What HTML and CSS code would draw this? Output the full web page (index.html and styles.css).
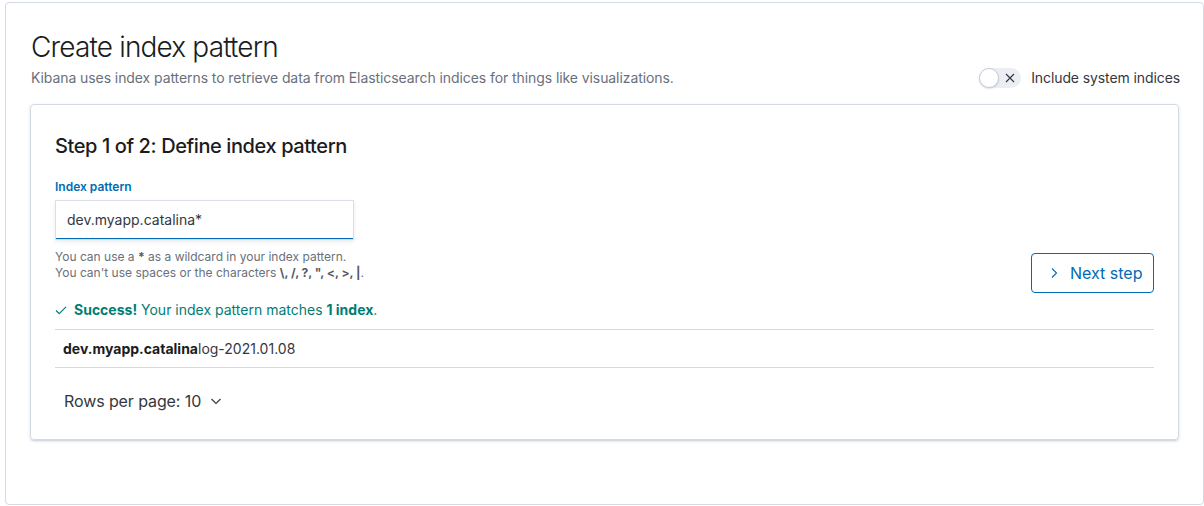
FILE: index.html
```html
<!DOCTYPE html>
<html lang="en">
<head>
    <meta charset="UTF-8">
    <title>Create index pattern</title>
    <link rel="stylesheet" href="styles.css">
</head>
<body>

<div class="page">
    <h1 class="title">Create index pattern</h1>
    <div class="intro">
        <p class="subtitle">Kibana uses index patterns to retrieve data from Elasticsearch indices for things like visualizations.</p>
        <label class="switch">
            <span class="switch-track">
                <span class="switch-knob"></span>
                <svg class="switch-x" width="12" height="12" viewBox="0 0 12 12"><path d="M2 2l8 8M10 2l-8 8" stroke="#343741" stroke-width="1.1" fill="none"/></svg>
            </span>
            Include system indices
        </label>
    </div>

    <div class="card">
        <h2 class="step">Step 1 of 2: Define index pattern</h2>

        <div class="step-body">
            <div class="form">
                <div class="field-label">Index pattern</div>
                <div class="field">dev.myapp.catalina*</div>
                <div class="help">
                    <div>You can use a <b>*</b> as a wildcard in your index pattern.</div>
                    <div>You can't use spaces or the characters <b>\, /, ?, ", &lt;, &gt;, |</b>.</div>
                </div>
                <div class="success">
                    <svg width="12" height="12" viewBox="0 0 12 12"><path d="M1 6.5l3.2 3.2L11 2.8" stroke="#017D73" stroke-width="1.1" fill="none"/></svg>
                    <span><b>Success!</b> Your index pattern matches <b>1 index</b>.</span>
                </div>
            </div>
            <button class="next">
                <svg width="12" height="12" viewBox="0 0 12 12"><path d="M4 1.5l4.5 4.5L4 10.5" stroke="#006BB4" stroke-width="1.1" fill="none"/></svg>
                Next step
            </button>
        </div>

        <div class="table">
            <div class="row"><b>dev.myapp.catalina</b>log-2021.01.08</div>
        </div>

        <div class="pager">
            Rows per page: 10
            <svg width="12" height="12" viewBox="0 0 12 12"><path d="M1.5 4l4.5 4.5L10.5 4" stroke="#343741" stroke-width="1.1" fill="none"/></svg>
        </div>
    </div>
</div>

</body>
</html>
```
FILE: styles.css
```css
body {
    margin: 0;
    background-color: #fff;
    font-family: Inter, "Noto Sans", sans-serif;
    color: #343741;
}

.page {
    margin: 2px 0 0 5px;
    height: 503px;
    box-sizing: border-box;
    border: 1px solid #D3DAE6;
    border-radius: 4px;
    padding: 24px 24px 0 24px;
}

.title {
    margin: 0 0 1px 1px;
    font-size: 28px;
    line-height: 40px;
    font-weight: 300;
    letter-spacing: -0.03em;
    color: #1a1c21;
}

.intro {
    display: flex;
    justify-content: space-between;
    align-items: center;
    margin-bottom: 16px;
}

.subtitle {
    margin: 0 0 0 1px;
    font-size: 14px;
    line-height: 20px;
    letter-spacing: -0.08px;
    color: #69707D;
}

.switch {
    display: flex;
    align-items: center;
    gap: 10px;
    font-size: 14px;
    line-height: 20px;
    letter-spacing: -0.1px;
    color: #343741;
    margin-right: -1px;
}

.switch-track {
    position: relative;
    width: 42px;
    height: 20px;
    border-radius: 10px;
    background-color: #EBEEF3;
}

.switch-knob {
    position: absolute;
    left: 0;
    top: 0;
    width: 18px;
    height: 18px;
    border-radius: 50%;
    background-color: #fff;
    border: 1px solid #C5CCD8;
    box-shadow: 0 1px 2px rgba(152, 162, 179, 0.35);
}

.switch-x {
    position: absolute;
    left: 25px;
    top: 4px;
}

.card {
    border: 1px solid #D3DAE6;
    border-radius: 4px;
    padding: 25px 24px 26px 24px;
    box-shadow: 0 1px 3px rgba(152, 162, 179, 0.35), 0 2px 2px -1px rgba(152, 162, 179, 0.3);
}

.step {
    margin: 0 0 16px 0;
    font-size: 20px;
    line-height: 32px;
    font-weight: 500;
    letter-spacing: -0.02em;
    color: #1a1c21;
}

.step-body {
    display: flex;
    justify-content: space-between;
    align-items: flex-end;
}

.field-label {
    font-size: 12px;
    line-height: 18px;
    font-weight: 600;
    color: #006BB4;
    margin-bottom: 4px;
}

.field {
    width: 299px;
    height: 40px;
    box-sizing: border-box;
    padding: 0 12px;
    font-size: 14px;
    line-height: 40px;
    color: #343741;
    background-color: #fff;
    box-shadow: inset 0 0 0 1px #D9DEE7, inset 0 -2px 0 0 #006BB4, 0 2px 4px rgba(152, 162, 179, 0.2);
}

.help {
    margin-top: 9px;
    font-size: 12px;
    line-height: 16px;
    color: #69707D;
}

.help b {
    color: #535966;
}

.success {
    display: flex;
    align-items: center;
    gap: 7px;
    margin-top: 19px;
    margin-bottom: 9px;
    font-size: 14px;
    line-height: 20px;
    color: #017D73;
}

.next {
    display: flex;
    align-items: center;
    gap: 10px;
    width: 123px;
    height: 40px;
    margin-bottom: 36px;
    padding: 0 0 0 16px;
    background-color: #fff;
    border: 1px solid #006BB4;
    border-radius: 4px;
    font-family: Inter, "Noto Sans", sans-serif;
    font-size: 16px;
    color: #006BB4;
    cursor: pointer;
}

.table {
    border-top: 1px solid #D3DAE6;
    border-bottom: 1px solid #D3DAE6;
}

.row {
    padding: 0 8px;
    height: 37px;
    line-height: 37px;
    font-size: 14px;
    color: #343741;
}

.row b {
    color: #1a1c21;
}

.pager {
    display: flex;
    align-items: center;
    gap: 9px;
    margin-top: 21px;
    padding-left: 9px;
    font-size: 16px;
    line-height: 24px;
    letter-spacing: -0.1px;
    color: #343741;
}
```
